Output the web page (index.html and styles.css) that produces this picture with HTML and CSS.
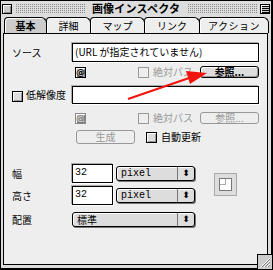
FILE: index.html
```html
<!DOCTYPE html>
<html lang="ja">
<head>
    <meta charset="UTF-8">
    <title>画像インスペクタ</title>
    <link rel="stylesheet" href="styles.css">
</head>
<body>
    <div class="window">
        <div class="titlebar">
            <span class="close-box"></span>
            <div class="stripes"></div>
            <span class="title">画像インスペクタ</span>
            <div class="stripes"></div>
            <span class="collapse-box"></span>
        </div>

        <div class="tabs">
            <div class="tab active">基本</div>
            <div class="tab t-detail">詳細</div>
            <div class="tab t-map">マップ</div>
            <div class="tab t-link">リンク</div>
            <div class="tab t-action">アクション</div>
        </div>

        <div class="panel">
            <!-- source -->
            <div class="row r-source">
                <span class="label">ソース</span>
                <div class="field wide">(URL が指定されていません)</div>
            </div>
            <div class="row r-opts">
                <span class="at-btn">@</span>
                <span class="check disabled"></span>
                <span class="check-text opt-text disabled">絶対パス</span>
                <span class="btn browse">参照...</span>
            </div>

            <!-- low resolution -->
            <div class="row r-lowres">
                <span class="check lowres-check"></span>
                <span class="check-text lowres-text">低解像度</span>
                <div class="field wide"></div>
            </div>
            <div class="row r-opts2">
                <span class="at-btn disabled">@</span>
                <span class="check disabled"></span>
                <span class="check-text opt-text disabled">絶対パス</span>
                <span class="btn browse disabled">参照...</span>
            </div>
            <div class="row r-gen">
                <span class="btn gen disabled">生成</span>
                <span class="check auto-check"></span>
                <span class="check-text">自動更新</span>
            </div>

            <!-- size -->
            <div class="size-group">
                <div class="size-rows">
                    <div class="row r-width">
                        <span class="label">幅</span>
                        <div class="field num">32</div>
                        <div class="popup unit"><span class="popup-val mono">pixel</span><span class="popup-arrow">⬍</span></div>
                    </div>
                    <div class="row r-height">
                        <span class="label">高さ</span>
                        <div class="field num">32</div>
                        <div class="popup unit"><span class="popup-val mono">pixel</span><span class="popup-arrow">⬍</span></div>
                    </div>
                </div>
                <div class="preview">
                    <div class="preview-inner"><span class="pv-corner"></span></div>
                </div>
            </div>

            <div class="row r-align">
                <span class="label">配置</span>
                <div class="popup align"><span class="popup-val">標準</span><span class="popup-arrow">⬍</span></div>
            </div>
        </div>

        <svg class="arrow" width="273" height="270" viewBox="0 0 273 270">
            <line x1="128" y1="99" x2="192" y2="77" stroke="#f2140c" stroke-width="2"/>
            <polygon points="207,73 186,71 190,84" fill="#f2140c"/>
        </svg>

        <span class="grip">
            <svg width="14" height="14" viewBox="0 0 14 14">
                <path d="M3 12 L12 3 M6 12 L12 6 M9 12 L12 9" stroke="#fff" stroke-width="1"/>
                <path d="M4 12 L12 4 M7 12 L12 7 M10 12 L12 10" stroke="#777" stroke-width="1"/>
            </svg>
        </span>
    </div>
</body>
</html>
```

FILE: styles.css
```css
body {
    margin: 0;
    background: #fff;
    font-family: "Noto Sans CJK JP", "Liberation Sans", sans-serif;
    font-size: 10px;
    color: #000;
}
.window {
    position: relative;
    width: 273px;
    height: 270px;
    box-sizing: border-box;
    border: 1px solid #000;
    border-right-width: 2px;
    border-bottom-width: 2px;
    background: #ddd;
}

/* title bar */
.titlebar {
    display: flex;
    align-items: center;
    height: 15px;
    padding: 0 1px 0 1px;
    gap: 3px;
}
.close-box,
.collapse-box {
    width: 8px;
    height: 8px;
    border: 1px solid #000;
    background: #ccc;
    box-shadow: inset 1px 1px 0 #fff, inset -1px -1px 0 #888;
    flex: none;
}
.collapse-box {
    background: repeating-linear-gradient(#ccc 0 1px, #000 1px 2px);
    box-shadow: inset 1px 1px 0 #fff;
}
.stripes {
    flex: 1;
    height: 9px;
    background-image:
        linear-gradient(90deg, #ddd 50%, transparent 50%),
        linear-gradient(#888 50%, #ddd 50%);
    background-size: 2px 2px;
}
.title {
    font-weight: bold;
    font-size: 11px;
    padding: 0 4px;
    line-height: 13px;
    letter-spacing: 0.2px;
}

/* tabs */
.tabs {
    display: flex;
    margin: 1px 0 0 3px;
    height: 16px;
}
.tab {
    box-sizing: border-box;
    height: 16px;
    border: 1px solid #000;
    border-bottom: none;
    border-radius: 4px 6px 0 0;
    background: #eee;
    text-align: center;
    line-height: 15px;
    margin-right: -1px;
    box-shadow: inset 1px 1px 0 #fff;
}
.tab.active {
    width: 43px;
    background: #ccc;
    font-weight: bold;
}
.t-detail { width: 45px; }
.t-map { width: 55px; }
.t-link { width: 56px; }
.t-action { width: 70px; letter-spacing: 0.5px; }

/* panel */
.panel {
    box-sizing: border-box;
    width: 265px;
    height: 232px;
    margin-left: 2px;
    border: 1px solid #000;
    background: #eee;
    padding: 8px 0 0 8px;
}
.row {
    display: flex;
    align-items: center;
}
.label {
    width: 60px;
    flex: none;
}
.field {
    box-sizing: border-box;
    border: 1px solid #000;
    background: #fff;
    box-shadow: 1px 1px 0 #fff, -1px -1px 0 #aaa;
    padding-left: 2px;
    line-height: 16px;
    height: 19px;
}
.field.wide { width: 187px; }
.field.num {
    width: 41px;
    font-family: "Liberation Mono", monospace;
    font-size: 10px;
}
.mono {
    font-family: "Liberation Mono", monospace;
    font-size: 10px;
}
.r-source { height: 19px; margin-top: 1px; }

.r-opts, .r-opts2 {
    height: 12px;
    margin-top: 4px;
    padding-left: 63px;
}
.r-opts2 { margin-top: 8px; }
.at-btn {
    box-sizing: border-box;
    width: 11px;
    height: 11px;
    border: 1px solid #000;
    background: #ccc;
    box-shadow: inset 1px 1px 0 #fff, inset -1px -1px 0 #888;
    font-family: "DejaVu Sans", sans-serif;
    font-size: 9px;
    font-weight: bold;
    line-height: 9px;
    text-align: center;
    margin-right: 52px;
}
.at-btn.disabled {
    border-color: #888;
    color: #666;
    font-weight: normal;
}
.check {
    box-sizing: border-box;
    width: 11px;
    height: 11px;
    border: 1px solid #000;
    background: #ddd;
    box-shadow: inset 1px 1px 0 #fff, inset -1px -1px 0 #999;
    flex: none;
}
.check.disabled {
    border-color: #999;
    background: #eee;
    box-shadow: none;
}
.check-text {
    margin-left: 4px;
    line-height: 12px;
}
.opt-text { width: 47px; }
.check-text.disabled { color: #999; }
.btn {
    box-sizing: border-box;
    border: 1px solid #000;
    border-radius: 3px;
    background: #ddd;
    box-shadow: inset 1px 1px 0 #fff, inset -1px -1px 0 #999;
    text-align: center;
    font-weight: bold;
}
.btn.browse {
    width: 59px;
    height: 12px;
    line-height: 10px;
}
.btn.disabled {
    border-color: #999;
    color: #999;
    background: #eee;
    box-shadow: none;
    font-weight: normal;
}

.r-lowres {
    height: 18px;
    margin-top: 8px;
}
.lowres-check { margin-top: 2px; }
.lowres-text { width: 46px; margin-left: 3px; }
.r-lowres .field { height: 18px; }

.r-gen {
    height: 14px;
    margin-top: 6px;
    padding-left: 64px;
}
.btn.gen {
    width: 59px;
    height: 14px;
    line-height: 12px;
    margin-right: 11px;
}

/* size */
.size-group {
    display: flex;
    align-items: center;
    margin-top: 20px;
}
.size-rows { width: 194px; }
.r-width, .r-height { height: 18px; }
.r-height { margin-top: 4px; }
.popup {
    box-sizing: border-box;
    display: flex;
    height: 15px;
    border: 1px solid #000;
    border-radius: 3px;
    background: #ddd;
    box-shadow: inset 1px 1px 0 #fff, 1px 1px 0 #777;
    margin-left: 3px;
}
.popup-val {
    flex: 1;
    padding-left: 4px;
    line-height: 13px;
}
.popup-arrow {
    width: 16px;
    border-left: 1px solid #777;
    text-align: center;
    font-size: 9px;
    line-height: 13px;
    font-family: "DejaVu Sans", sans-serif;
}
.popup.unit { width: 79px; }
.popup.align { width: 123px; margin-left: 0; }

.preview {
    box-sizing: border-box;
    width: 23px;
    height: 23px;
    margin-left: 8px;
    border: 1px solid #aaa;
    background: #ddd;
    padding: 4px;
}
.preview-inner {
    position: relative;
    box-sizing: border-box;
    width: 13px;
    height: 13px;
    border: 1px solid #777;
    background: #fff;
}
.pv-corner {
    position: absolute;
    left: 0;
    top: 0;
    width: 5px;
    height: 5px;
    border-right: 1px solid #aaa;
    border-bottom: 1px solid #aaa;
}

.r-align {
    height: 15px;
    margin-top: 8px;
}

/* overlays */
.arrow {
    position: absolute;
    left: -1px;
    top: -1px;
    pointer-events: none;
}
.grip {
    position: absolute;
    right: -2px;
    bottom: -2px;
    box-sizing: border-box;
    width: 16px;
    height: 16px;
    border: 1px solid #000;
    background: #ccc;
}
.grip svg { display: block; }
```
